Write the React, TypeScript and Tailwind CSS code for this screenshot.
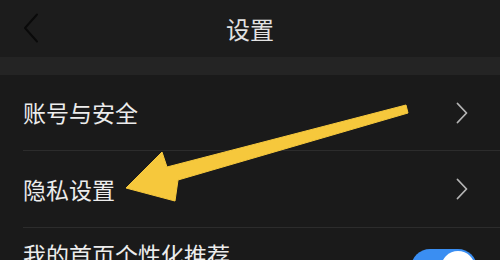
import React from "react";

const font = { fontFamily: '"Noto Sans CJK SC", "Noto Sans", sans-serif' };

function Chevron() {
  return (
    <svg width="12" height="22" viewBox="0 0 12 22" fill="none">
      <path d="M1.5 1.5 L10.5 11 L1.5 20.5" stroke="#b4b4b4" strokeWidth="1.8" strokeLinecap="round" strokeLinejoin="round" />
    </svg>
  );
}

export default function App() {
  return (
    <div className="relative w-[500px] h-[260px] overflow-hidden bg-[#1a1a1a]" style={font}>
      {/* header */}
      <div className="relative h-[57px] bg-[#1c1c1c] flex items-center justify-center">
        <div className="absolute left-[23px] top-[13px]">
          <svg width="16" height="30" viewBox="0 0 16 30" fill="none">
            <path d="M14 1.5 L2 15 L14 28.5" stroke="#0a0a0a" strokeWidth="2" strokeLinecap="round" strokeLinejoin="round" />
          </svg>
        </div>
        <span className="text-[24px] leading-none text-[#e2e2e2]">设置</span>
      </div>
      <div className="h-[18px] bg-[#242424]" />
      {/* list */}
      <div className="pl-[23px]">
        <div className="h-[76px] flex items-center justify-between border-b border-[#2c2c2c] pr-[32px]">
          <span className="text-[23px] leading-none text-[#ececec]">账号与安全</span>
          <Chevron />
        </div>
        <div className="h-[77px] flex items-center justify-between border-b border-[#2c2c2c] pr-[32px]">
          <span className="text-[23px] leading-none text-[#ececec]">隐私设置</span>
          <Chevron />
        </div>
        <div className="h-[80px] flex items-start justify-between pr-[23px] pt-[15px]">
          <span className="text-[23px] leading-none text-[#ececec]">我的首页个性化推荐</span>
          <div className="mt-[6px] w-[66px] h-[38px] rounded-full bg-[#3a8ef2] flex items-center justify-end pr-[2px]">
            <div className="w-[34px] h-[34px] rounded-full bg-white" />
          </div>
        </div>
      </div>
      {/* arrow overlay */}
      <svg className="absolute left-0 top-0" width="500" height="260" viewBox="0 0 500 260">
        <polygon
          points="406,105 408,113 178,180 175,201 126,188 162,152 167,167"
          fill="#f6c83c"
          stroke="#f6c83c"
          strokeWidth="1"
          strokeLinejoin="round"
        />
      </svg>
    </div>
  );
}
